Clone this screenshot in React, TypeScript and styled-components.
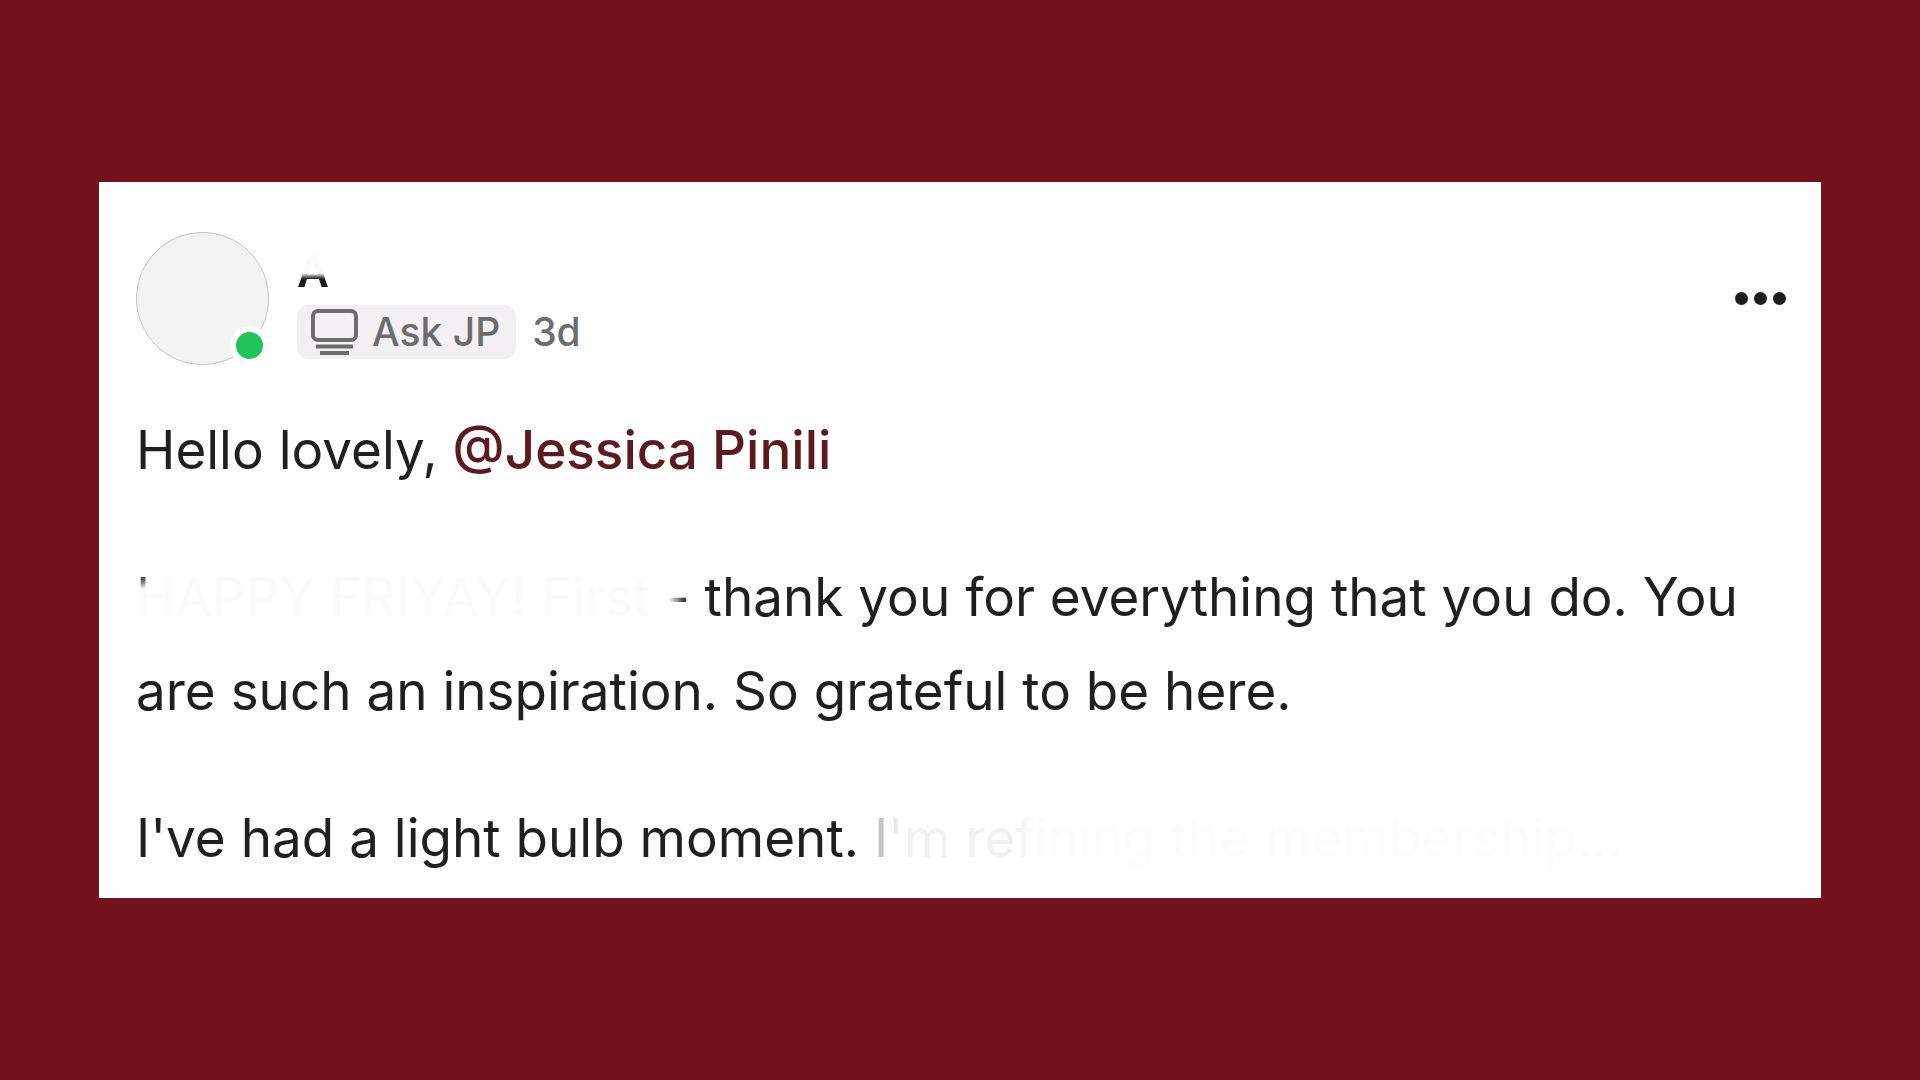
import React from "react";
import styled, { createGlobalStyle } from "styled-components";

const GlobalStyle = createGlobalStyle`
  *, *::before, *::after { box-sizing: border-box; }
  body {
    margin: 0;
    background: #71121c;
    color: #1f1f1f;
    font-family: Inter, "Liberation Sans", sans-serif;
  }
`;

const Page = styled.main`
  min-height: 100vh;
  display: flex;
  align-items: center;
  padding: 24px 99px;
`;

const Card = styled.article`
  flex: 1;
  min-width: 0;
  padding: 50px 35px 13px 37px;
  background: #fefefe;
`;

const Header = styled.header`
  display: flex;
  align-items: center;
  gap: 28px;
`;

const Avatar = styled.div`
  position: relative;
  flex: none;
  width: 133px;
  height: 133px;
  border: 1px solid #c4c4c4;
  border-radius: 50%;
  background: #f3f3f3;
`;

const OnlineDot = styled.span`
  position: absolute;
  right: -1px;
  bottom: -1px;
  width: 39px;
  height: 39px;
  border: 6px solid #fefefe;
  border-radius: 50%;
  background: #1fc558;
`;

const Author = styled.div`
  flex: 1;
  display: flex;
  flex-direction: column;
`;

const Name = styled.h2`
  margin: 0;
  font-size: 44px;
  line-height: 67px;
  font-weight: 600;
  color: transparent;
  background: linear-gradient(#fafafa 0 35px, #1a1a1a 41px);
  background-clip: text;
`;

const Meta = styled.div`
  display: flex;
  align-items: center;
  gap: 16px;
  font-size: 39px;
  line-height: 54px;
  font-weight: 500;
  color: #6c6c6c;
`;

const Space = styled.a`
  display: flex;
  align-items: center;
  gap: 14px;
  padding: 0 16px 0 14px;
  border-radius: 12px;
  background: #f2f0f3;
  color: inherit;
  text-decoration: none;
`;

const MoreButton = styled.button`
  display: flex;
  padding: 12px 0;
  border: 0;
  background: none;
  color: #1c1c1c;
  cursor: pointer;
`;

const Body = styled.div`
  display: flex;
  flex-direction: column;
  gap: 53px;
  margin-top: 38px;
  font-size: 53px;
  line-height: 94px;

  p { margin: 0; }
`;

const Mention = styled.a`
  color: #5a1a20;
  font-weight: 500;
  text-decoration: none;
`;

const Faded = styled.span<{ $ink: string }>`
  color: transparent;
  background: ${(p) => p.$ink};
  background-clip: text;
`;

const ScreenIcon = () => (
  <svg width="47" height="46" viewBox="0 0 47 46" fill="none" stroke="#6c6c6c" strokeWidth="4" aria-hidden="true">
    <rect x="2" y="2" width="43" height="29" rx="5" />
    <path d="M5 37.500H42M9 44H38" strokeWidth="4" />
  </svg>
);

const DotsIcon = () => (
  <svg width="51" height="13" viewBox="0 0 51 13" fill="currentColor" aria-hidden="true">
    <circle cx="6.500" cy="6.500" r="6.500" />
    <circle cx="25.500" cy="6.500" r="6.500" />
    <circle cx="44.500" cy="6.500" r="6.500" />
  </svg>
);

export default function App() {
  return (
    <>
      <GlobalStyle />
      <Page>
        <Card>
          <Header>
            <Avatar>
              <OnlineDot />
            </Avatar>
            <Author>
              <Name>A</Name>
              <Meta>
                <Space href="#ask-jp">
                  <ScreenIcon />
                  Ask JP
                </Space>
                <time>3d</time>
              </Meta>
            </Author>
            <MoreButton type="button" aria-label="More options">
              <DotsIcon />
            </MoreButton>
          </Header>
          <Body>
            <p>
              Hello lovely, <Mention href="#jessica-pinili">@Jessica Pinili</Mention>
            </p>
            <p>
              <Faded $ink="radial-gradient(circle at 6px 12px, #555 0 3px, #fbfbfb 12px)">HAPPY FRIYAY! First</Faded>{" "}
              <Faded $ink="linear-gradient(90deg, #fefefe 15%, #1f1f1f 85%)">-</Faded> thank you for everything that
              you do. You are such an inspiration. So grateful to be here.
            </p>
            <p>
              I've had a light bulb moment.{" "}
              <Faded $ink="linear-gradient(90deg, #c4c4c4 0 12px, #f1f1f1 24px 140px, #fcfcfc 160px)">
                I'm refining the membership...
              </Faded>
            </p>
          </Body>
        </Card>
      </Page>
    </>
  );
}
